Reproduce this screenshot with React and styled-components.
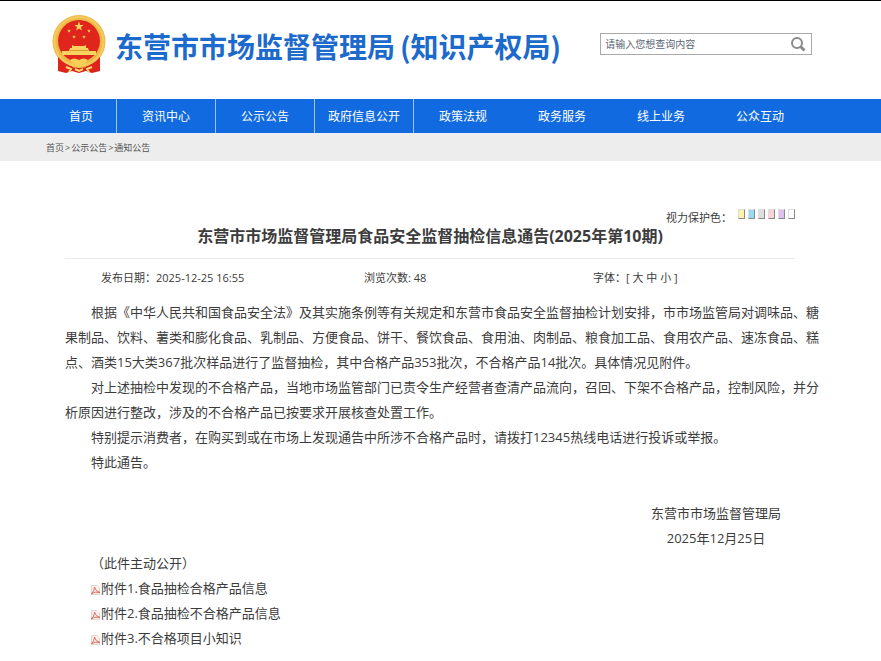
import React from 'react';
import styled, { createGlobalStyle } from 'styled-components';

const GlobalStyle = createGlobalStyle`
  * {
    box-sizing: border-box;
  }

  body {
    margin: 0;
    background: #ffffff;
    color: #3c3c3c;
    font-family: 'Open Sans', 'Noto Sans CJK SC', sans-serif;
    font-size: 13px;
  }

  a {
    color: inherit;
    text-decoration: none;
  }

  button,
  input {
    font-family: inherit;
    color: inherit;
  }
`;

const Header = styled.header`
  display: flex;
  align-items: flex-start;
  height: 99px;
  padding: 13px 16px 0 52px;
  border-top: 1px solid #000000;
`;

const Emblem = styled.svg`
  flex: none;
  width: 54px;
  height: 60px;
`;

const SiteTitle = styled.h1`
  display: flex;
  flex: none;
  gap: 5px;
  margin: 12px 0 0 9px;
  color: #1c6acb;
  font-family: 'Noto Sans CJK SC', sans-serif;
  font-size: 28px;
  font-weight: 700;
  line-height: 40px;
`;

const Search = styled.form`
  display: flex;
  width: 212px;
  height: 22px;
  margin: 19px 0 0 39px;
  border: 1px solid #a9a9a9;
`;

const SearchInput = styled.input`
  flex: 1;
  min-width: 0;
  padding: 0 4px;
  border: 0;
  background: none;
  font-size: 10px;
  outline: none;

  &::placeholder {
    color: #5a6675;
    opacity: 1;
  }
`;

const SearchButton = styled.button`
  display: flex;
  align-items: center;
  justify-content: center;
  width: 26px;
  padding: 0;
  border: 0;
  background: none;
  cursor: pointer;
`;

const Nav = styled.nav`
  display: flex;
  height: 34px;
  padding-left: 46px;
  background: #116adf;
`;

const NavLink = styled.a`
  width: ${props => (props.$short ? '71px' : '99px')};
  border-right: 1px solid ${props => (props.$divided ? '#9cc4f4' : 'transparent')};
  color: #ffffff;
  font-size: 12px;
  line-height: 36px;
  text-align: center;
`;

const Breadcrumb = styled.nav`
  display: flex;
  gap: 1px;
  height: 28px;
  padding-left: 46px;
  background: #ededed;
  color: #555555;
  font-size: 9px;
  line-height: 29px;
`;

const Article = styled.main`
  padding: 43px 60px 8px 65px;
`;

const ArticleHead = styled.div`
  margin-right: 26px;
`;

const EyeCare = styled.div`
  display: flex;
  justify-content: flex-end;
  height: 22px;
  font-size: 11px;
  line-height: 28px;
`;

const Swatches = styled.div`
  display: flex;
  gap: 3px;
  margin: 5px 0 0 6px;
`;

const Swatch = styled.button`
  width: 7px;
  height: 10px;
  padding: 0;
  border: 1px solid;
  border-color: #dddddd #888888 #888888 #dddddd;
  background: ${props => props.$color};
  cursor: pointer;
`;

const ArticleTitle = styled.h2`
  margin: 0;
  padding-bottom: 12px;
  border-bottom: 1px solid #e9e9e9;
  font-size: 16px;
  font-weight: 700;
  line-height: 20px;
  text-align: center;
`;

const Meta = styled.div`
  display: grid;
  grid-template-columns: 263fr 229fr 202fr;
  padding: 0 0 3px 36px;
  font-size: 11px;
  line-height: 38px;
`;

const SizeButton = styled.button`
  padding: 0;
  border: 0;
  background: none;
  font-size: 11px;
  cursor: pointer;
`;

const Paragraph = styled.p`
  margin: 0;
  line-height: 25px;
  text-indent: 2em;
`;

const Signature = styled.div`
  width: fit-content;
  margin: 26px 40px 0 auto;
  line-height: 25px;
  text-align: center;
`;

const Attachments = styled.ul`
  margin: 0;
  padding: 0 0 0 25px;
  list-style: none;
  line-height: 25px;
`;

const Attachment = styled.a`
  display: flex;
  align-items: center;
  width: fit-content;
`;

const PdfIcon = styled.svg`
  width: 11px;
  height: 12px;
  margin-top: 3px;
`;

const navItems = [
  { label: '首页', short: true, divided: true },
  { label: '资讯中心', divided: true },
  { label: '公示公告', divided: true },
  { label: '政府信息公开', divided: true },
  { label: '政策法规' },
  { label: '政务服务' },
  { label: '线上业务' },
  { label: '公众互动' },
];

const swatches = [
  { name: '黄色', color: '#fbf3a6' },
  { name: '蓝色', color: '#9ad9f3' },
  { name: '灰色', color: '#dedede' },
  { name: '粉色', color: '#f8d2d6' },
  { name: '紫色', color: '#dfc0f0' },
  { name: '白色', color: '#ffffff' },
];

const paragraphs = [
  '根据《中华人民共和国食品安全法》及其实施条例等有关规定和东营市食品安全监督抽检计划安排，市市场监管局对调味品、糖果制品、饮料、薯类和膨化食品、乳制品、方便食品、饼干、餐饮食品、食用油、肉制品、粮食加工品、食用农产品、速冻食品、糕点、酒类15大类367批次样品进行了监督抽检，其中合格产品353批次，不合格产品14批次。具体情况见附件。',
  '对上述抽检中发现的不合格产品，当地市场监管部门已责令生产经营者查清产品流向，召回、下架不合格产品，控制风险，并分析原因进行整改，涉及的不合格产品已按要求开展核查处置工作。',
  '特别提示消费者，在购买到或在市场上发现通告中所涉不合格产品时，请拨打12345热线电话进行投诉或举报。',
  '特此通告。',
];

const attachments = [
  '附件1.食品抽检合格产品信息',
  '附件2.食品抽检不合格产品信息',
  '附件3.不合格项目小知识',
];

const star = '0,-5 1.2,-1.6 4.8,-1.5 1.9,0.6 2.9,4 0,2 -2.9,4 -1.9,0.6 -4.8,-1.5 -1.2,-1.6';

function NationalEmblem() {
  return (
    <Emblem viewBox="0 0 54 60" role="img" aria-label="国徽">
      <path d="M7 42 L6 57 L14 59 L20 57 L27 59 L34 57 L40 59 L48 57 L47 42 Z" fill="#d8211c" />
      <circle cx="27" cy="27.500" r="26.500" fill="#edbb45" />
      <circle cx="27" cy="27.500" r="24.500" fill="none" stroke="#f4ca60" strokeWidth="2" />
      <circle cx="27" cy="27" r="21" fill="#e0261c" />
      <g fill="#f6d35e">
        <polygon points={star} transform="translate(27 12.500)" />
        <polygon points={star} transform="translate(17 17) scale(0.4)" />
        <polygon points={star} transform="translate(37 17) scale(0.4)" />
        <polygon points={star} transform="translate(22 23) scale(0.4)" />
        <polygon points={star} transform="translate(32 23) scale(0.4)" />
        <path d="M20 31 L22 32 H32 L34 31 V34 H36 L37 37 H44 V41 H10 V37 H17 L18 34 H20 Z" />
      </g>
      <path d="M18 36.500 H36" stroke="#e39a2c" strokeWidth="1" />
      <path d="M6 43 Q13 51 20 52 L17 58 L6 56 Z M48 43 Q41 51 34 52 L37 58 L48 56 Z" fill="#df241b" />
      <path d="M18 46 Q22 43 27 46 Q32 43 36 46 L33 49 L37 52 L30 51 L27 54 L24 51 L17 52 L21 49 Z" fill="#f7cf58" />
      <path d="M14 53 L19 55 L17 58 M40 53 L35 55 L37 58 M23 55 L27 57 L31 55" fill="none" stroke="#f7d96f" strokeWidth="2" />
    </Emblem>
  );
}

export default function App() {
  return (
    <>
      <GlobalStyle />
      <Header>
        <NationalEmblem />
        <SiteTitle>
          <span>东营市市场监督管理局</span>
          <span>(知识产权局)</span>
        </SiteTitle>
        <Search onSubmit={e => e.preventDefault()}>
          <SearchInput type="text" aria-label="搜索" placeholder="请输入您想查询内容" />
          <SearchButton type="submit" aria-label="查询">
            <svg width="16" height="16" viewBox="0 0 16 16" fill="none" stroke="#8a8a8a" strokeWidth="2">
              <circle cx="7" cy="7" r="5" />
              <path d="M10.500 10.500 L14.500 14.500" strokeWidth="3" />
            </svg>
          </SearchButton>
        </Search>
      </Header>

      <Nav>
        {navItems.map(item => (
          <NavLink key={item.label} href="#" $short={item.short} $divided={item.divided}>
            {item.label}
          </NavLink>
        ))}
      </Nav>
      <Breadcrumb>
        <a href="#">首页</a>&gt;<a href="#">公示公告</a>&gt;<a href="#">通知公告</a>
      </Breadcrumb>

      <Article>
        <ArticleHead>
          <EyeCare>
            视力保护色：
            <Swatches>
              {swatches.map(s => (
                <Swatch key={s.name} type="button" aria-label={s.name} $color={s.color} />
              ))}
            </Swatches>
          </EyeCare>
          <ArticleTitle>东营市市场监督管理局食品安全监督抽检信息通告(2025年第10期)</ArticleTitle>
          <Meta>
            <span>发布日期：2025-12-25 16:55</span>
            <span>浏览次数: 48</span>
            <span>
              字体：[ <SizeButton type="button">大</SizeButton>{' '}
              <SizeButton type="button">中</SizeButton>{' '}
              <SizeButton type="button">小</SizeButton> ]
            </span>
          </Meta>
        </ArticleHead>

        {paragraphs.map(text => (
          <Paragraph key={text}>{text}</Paragraph>
        ))}

        <Signature>
          东营市市场监督管理局
          <br />
          2025年12月25日
        </Signature>

        <Paragraph>（此件主动公开）</Paragraph>
        <Attachments>
          {attachments.map(name => (
            <li key={name}>
              <Attachment href="#">
                <PdfIcon viewBox="0 0 11 12" fill="none" aria-hidden="true">
                  <path d="M1.500 1.500 H7 L9.500 4 V10.500 H1.500 Z" fill="#fdf3f1" stroke="#e6d3d0" />
                  <path d="M1 10 Q4.500 7.500 4.500 3 Q5.500 7.500 10 8.500 Q5 7 1 10" stroke="#de6a60" />
                </PdfIcon>
                {name}
              </Attachment>
            </li>
          ))}
        </Attachments>
      </Article>
    </>
  );
}
